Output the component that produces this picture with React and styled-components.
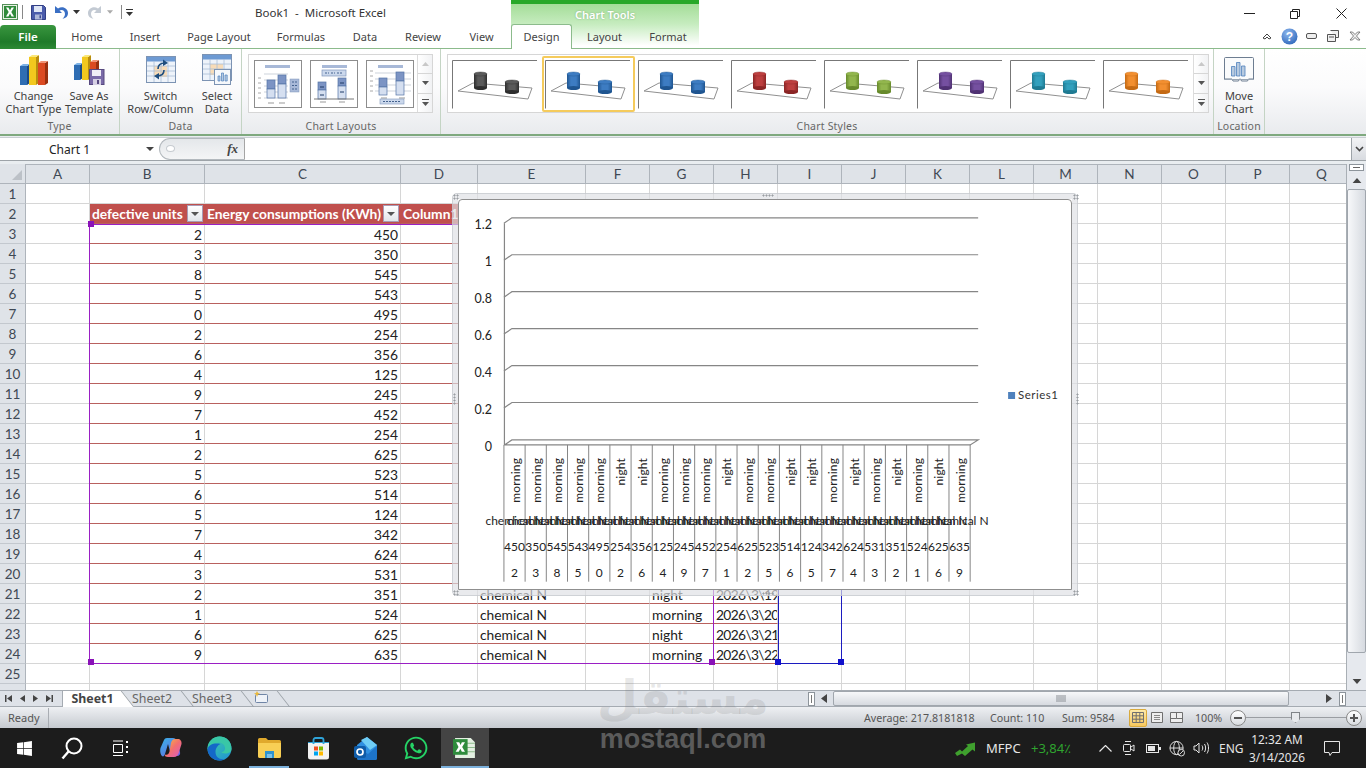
import React from 'react';
import styled, { createGlobalStyle } from 'styled-components';
import { FaWhatsapp, FaWindows } from 'react-icons/fa';

const UI = `"Noto Sans", "Open Sans", sans-serif`;
const CELL = `Lato, "Open Sans", sans-serif`;

const Global = createGlobalStyle`
  html, body { margin: 0; padding: 0; width: 1366px; height: 768px; overflow: hidden; background: #fff; }
  * { box-sizing: border-box; }
`;

const Page = styled.div`
  position: relative; width: 1366px; height: 768px; overflow: hidden;
  font-family: ${UI}; display: flex; flex-direction: column; background: #fff;
`;

/* ---------- Title bar ---------- */
const TitleBar = styled.div`display: flex; height: 24px; flex: none; align-items: stretch; background: #fff;`;
const QuickAccess = styled.div`width: 255px; display: flex; align-items: center; padding-left: 2px;`;
const QaSep = styled.span`width: 1px; height: 14px; background: #888; margin: ${p => p.$m || '0 7px 0 5px'};`;
const Gap = styled.span`width: ${p => p.$w}px; flex: none;`;
const TitleText = styled.div`width: 256px; font-size: 11.5px; color: #333; line-height: 25px; white-space: pre;`;
const ChartToolsCap = styled.div`
  width: 188px; text-align: center; font-size: 11px; font-weight: 600; color: #fff;
  border-top: 4px solid #28a828; text-shadow: 0 0 2px #7fb27a;
  background: linear-gradient(#a4dd98, #c6ecbf);
  line-height: 22px;
`;
const WinControls = styled.div`margin-left: auto; display: flex; padding-right: 2px;`;
const WinBtn = styled.div`width: 46px; display: flex; align-items: center; justify-content: center; padding-top: 3px;`;

/* ---------- Tab row ---------- */
const TabRow = styled.div`display: flex; height: 25px; flex: none; border-bottom: 1px solid #8cbb8c; background: #fff;`;
const FileTab = styled.div`
  width: 56px; margin-top: 1px; height: 24px; border-radius: 4px 4px 0 0; color: #fff; font-size: 11.5px; font-weight: 600;
  text-align: center; line-height: 23px; background: linear-gradient(#39963f, #1f7a29 70%, #2d8a34);
`;
const Tab = styled.div`
  width: ${p => p.$w}px; text-align: center; font-size: 11px; color: #444; line-height: 25px; height: 25px;
  ${p => p.$active && `background: #fff; border: 1px solid #8cbb8c; border-bottom: 0; border-radius: 3px 3px 0 0; line-height: 24px;`}
`;
const ContextTabs = styled.div`display: flex; width: 188px; background: linear-gradient(#c6ecbf, #fff 90%);`;
const HelpIcons = styled.div`margin-left: auto; display: flex; align-items: center;`;
const HelpSlot = styled.div`width: 22px; display: flex; justify-content: center; align-items: center;`;

/* ---------- Ribbon ---------- */
const Ribbon = styled.div`
  display: flex; height: 87px; flex: none; border-bottom: 2px solid #7fa97f;
  background: linear-gradient(#fff 0%, #fbfbfc 45%, #e9ebee 100%);
`;
const Group = styled.div`
  width: ${p => p.$w}px; display: flex; flex-direction: column; border-right: 1px solid #c4d4c4; flex: none;
`;
const GroupBody = styled.div`height: 69px; display: flex; padding-left: ${p => p.$pl || 0}px; gap: ${p => p.$gap || 0}px; padding-top: ${p => p.$pt || 0}px;`;
const GroupLabel = styled.div`height: 16px; text-align: center; font-size: 10.5px; color: #666; line-height: 16px; letter-spacing: .2px;`;
const LargeBtn = styled.div`
  width: ${p => p.$w}px; display: flex; flex-direction: column; align-items: center; font-size: 11px; color: #3f3f3f;
  line-height: 12.5px; text-align: center; white-space: nowrap;
`;
const BigIcon = styled.div`height: ${p => p.$h || 36}px; display: flex; align-items: flex-start; justify-content: center; flex: none; padding-top: ${p => p.$pt || 0}px;`;
const Gallery = styled.div`
  display: flex; height: 59px; background: #fff; border: 1px solid #d6d6d6; width: ${p => p.$w}px;
  padding: ${p => p.$pad || '0'};
`;
const Thumbs = styled.div`display: flex; gap: ${p => p.$gap || 0}px; flex: 1;`;
const GalleryScroll = styled.div`width: 15px; display: flex; flex-direction: column; border-left: 1px solid #dcdcdc; background: linear-gradient(90deg,#fff,#f1f2f4); margin-top: ${p => p.$mt}px;`;
const ScrollBtn = styled.div`flex: 1; display: flex; align-items: center; justify-content: center; border-bottom: 1px solid #d6d6d6; &:last-child { border-bottom: 0; }`;
const LayoutThumb = styled.div`width: 48px; height: 48px; border: 1px solid #8d8d8d; background: #fff; flex: none;`;
const StyleThumb = styled.div`
  width: 93px; height: 56px; flex: none; padding: 2px 0 0 1px;
  border-radius: 2px; border: 2px solid ${p => p.$sel ? '#f5cb5c' : 'transparent'};
`;

/* ---------- Formula bar ---------- */
const FormulaWrap = styled.div`height: 28px; flex: none; background: #e9edf0; padding-top: 1px; display: flex; flex-direction: column;`;
const FormulaRow = styled.div`display: flex; height: 24px; background: #fff; border-bottom: 1px solid #9da3a8; border-top: 1px solid #c9ced2;`;
const NameBox = styled.div`width: 159px; display: flex; align-items: center; padding-left: 49px; font-size: 12px; color: #222;`;
const NameArrow = styled.span`margin-left: 56px; width: 0; height: 0; border: 4px solid transparent; border-top: 4px solid #444; border-bottom: 0;`;
const FormulaPill = styled.div`
  width: 86px; display: flex; align-items: center; justify-content: flex-end; padding-right: 6px;
  border-radius: 12px 0 0 12px; background: linear-gradient(#e4e7ea, #f4f5f6); border: 1px solid #b3b9be; border-right: 1px solid #a5a5a5;
  font-family: "Liberation Serif", serif; font-style: italic; font-weight: 700; font-size: 13px; color: #444; position: relative;
`;
const PillDot = styled.span`position: absolute; left: 6px; top: 6px; width: 9px; height: 7px; border-radius: 50%; background: #fff; border: 1px solid #c6cbd0;`;
const FormulaInput = styled.div`flex: 1;`;
const FormulaExpand = styled.div`width: 15px; background: linear-gradient(#f2f3f5, #d8dbe0); border-left: 1px solid #9da3a8; display: flex; align-items: center; justify-content: center;`;

/* ---------- Sheet ---------- */
const SheetArea = styled.div`height: 526px; flex: none; display: flex; overflow: hidden;`;
const Grid = styled.div`width: 1346px; position: relative; overflow: hidden; font-family: ${CELL};`;
const Row = styled.div`display: flex; height: 20px;`;
const Corner = styled.div`width: 26px; flex: none; background: #dfe3e8; border-right: 1px solid #aeb4bb; border-bottom: 1px solid #aeb4bb; position: relative;
  &::after { content: ''; position: absolute; right: 3px; bottom: 3px; border: 5px solid transparent; border-right-color: #bcc1c7; border-bottom-color: #bcc1c7; }
`;
const ColHead = styled.div`
  width: ${p => p.$w}px; flex: none; background: #dfe3e8; border-right: 1px solid #aeb4bb; border-bottom: 1px solid #aeb4bb; border-top: 1px solid #aeb4bb;
  text-align: center; font-size: 13.5px; color: #3f4954; line-height: 19px;
`;
const RowHead = styled.div`
  width: 26px; flex: none; background: #dfe3e8; border-right: 1px solid #aeb4bb; border-bottom: 1px solid #c3c8ce;
  text-align: center; font-size: 13.5px; color: #3f4954; line-height: 21px;
`;
const Cell = styled.div`
  width: ${p => p.$w}px; flex: none; position: relative; overflow: hidden; white-space: nowrap;
  border-right: 1px solid ${p => p.$header ? 'transparent' : '#d6d6d6'};
  border-bottom: 1px solid ${p => p.$red ? '#b9615e' : '#d6d6d6'};
  background: ${p => p.$header ? '#c0504d' : 'transparent'};
  color: ${p => p.$header ? '#fff' : '#222'};
  font-weight: ${p => p.$header ? 700 : 400};
  text-align: ${p => p.$num ? 'right' : 'left'};
  padding: ${p => p.$header ? '0 2px' : '1px 2px 0'}; font-size: 13.8px; line-height: 20px;
  letter-spacing: ${p => p.$tight ? '-.65px' : 'normal'};
`;
const FilterBtn = styled.span`
  position: absolute; right: 1px; top: 1px; width: 16px; height: 17px; background: linear-gradient(#fff, #e2e5ea); border: 1px solid #a89bb5;
  display: flex; align-items: center; justify-content: center;
  &::after { content: ''; border: 4px solid transparent; border-top: 4px solid #555; border-bottom: 0; }
`;
const RangeFrame = styled.div`
  position: absolute; left: ${p => p.$l}px; top: ${p => p.$t}px; width: ${p => p.$w}px; height: ${p => p.$h}px;
  border: 1px solid ${p => p.$c}; pointer-events: none;
`;
const Handle = styled.span`
  position: absolute; left: ${p => p.$x - 3}px; top: ${p => p.$y - 3}px; width: 6px; height: 6px; background: ${p => p.$c};
`;

/* ---------- Chart ---------- */
const ChartFrame = styled.div`
  position: absolute; left: 452px; top: 29px; width: 626px; height: 403px;
  border: 6px solid rgba(222,224,228,.68); border-radius: 5px; outline: 1px solid rgba(190,194,198,.6); outline-offset: -1px;
`;
const ChartInner = styled.div`width: 100%; height: 100%; background: #fff; border: 1px solid #8f8f8f; border-radius: 4px 4px 0 0;`;
const ChartSvg = styled.svg`display: block; width: 100%; height: 100%; font-family: ${CELL};`;
const Grip = styled.span`
  position: absolute; width: ${p => p.$w}px; height: ${p => p.$h}px;
  left: ${p => p.$l}; top: ${p => p.$t};
  background-image: radial-gradient(#9a9ea3 45%, transparent 50%); background-size: 3px 3px;
`;

/* ---------- Scrollbars ---------- */
const VScroll = styled.div`width: 20px; flex: none; background: #e6e9ee; border-left: 1px solid #a9afb5; display: flex; flex-direction: column; align-items: center;`;
const SplitTop = styled.div`width: 15px; height: 7px; background: #fff; border: 1px solid #8d949b; display:flex; align-items:center; justify-content:center; &::after{content:'';width:7px;height:1px;background:#666;}`;
const ArrowBtn = styled.div`height: 18px; width: 100%; display: flex; align-items: center; justify-content: center; flex: none;`;
const VThumb = styled.div`width: 100%; height: 464px; background: linear-gradient(90deg, #f7f8fa, #d6dae0); border: 1px solid #a0a6ad; border-radius: 2px; flex: none;`;
const VSpacer = styled.div`flex: 1;`;

const BottomBar = styled.div`height: 17px; flex: none; display: flex; background: #dee2e8; border-top: 1px solid #a5abb2; border-bottom: 1px solid #a5abb2; font-size: 12.4px;`;
const NavBtns = styled.div`width: 63px; display: flex; align-items: center; padding-left: 5px; gap: 8px; border-right: 1px solid #a5abb2;`;
const SheetTab = styled.div`
  width: ${p => p.$w}px; height: 16px; position: relative; text-align: center; line-height: 15px;
  color: ${p => p.$active ? '#444' : '#666'}; font-weight: ${p => p.$active ? 700 : 400};
  background: ${p => p.$active ? '#fff' : 'transparent'};
  &::after { content: ''; position: absolute; right: -6px; top: 0; width: 12px; height: 16px; border-right: 1px solid #9aa0a6; transform: skewX(38deg); background: ${p => p.$active ? '#fff' : 'transparent'}; }
`;
const TabLabel = styled.span`position: relative; z-index: 1;`;
const TabsFill = styled.div`flex: 1; display: flex;`;
const HScrollArea = styled.div`width: 558px; display: flex; align-items: center; flex: none;`;
const SplitV = styled.div`width: 7px; height: 14px; background: #fff; border: 1px solid #8d949b; flex: none; margin: ${p => p.$m}; display:flex; align-items:center; justify-content:center; &::after{content:'';width:1px;height:8px;background:#777;}`;
const HThumb = styled.div`width: 456px; height: 15px; margin-right: 37px; background: linear-gradient(#f7f8fa, #d6dae0); border: 1px solid #a0a6ad; border-radius: 2px; display: flex; align-items: center; justify-content: center; flex: none;`;
const HArrow = styled.svg`flex: none; margin: ${p => p.$m};`;

const StatusBar = styled.div`
  height: 21px; flex: none; display: flex; align-items: center; background: linear-gradient(#eef0f3, #c6cad0); font-size: 10.7px; color: #555;
`;
const ReadyText = styled.div`width: 49px; padding-left: 8px; border-right: 1px solid #a9adb3; line-height: 20px; font-size: 11px;`;
const StatText = styled.div`margin-left: ${p => p.$ml}px; width: ${p => p.$w}px; white-space: nowrap; flex: none;`;
const ViewBtn = styled.div`
  width: 18px; height: 18px; display: flex; align-items: center; justify-content: center; margin-left: ${p => p.$ml || 0}px; flex: none;
  ${p => p.$on && 'background: linear-gradient(#fde9a8,#f7c85e); border: 1px solid #d8a93d; border-radius: 2px;'}
`;
const ZoomRound = styled.div`
  width: 16px; height: 16px; border-radius: 50%; border: 1px solid #888; background: linear-gradient(#fff,#d8dbe0); display: flex; align-items: center; justify-content: center; flex: none;
  margin-left: ${p => p.$ml}px; position: relative;
  &::after { content: ''; width: 8px; height: 2px; background: #555; }
`;
const ZoomRoundPlus = styled(ZoomRound)`
  &::before { content: ''; position: absolute; width: 2px; height: 8px; background: #555; left: 6px; top: 3px; }
`;
const SliderTrack = styled.div`width: 100px; height: 1px; background: #9a9da2; position: relative; flex: none;`;
const SliderThumb = styled.span`
  position: absolute; left: 45px; top: -5px; width: 9px; height: 11px; background: #e8eaed; border: 1px solid #808488;
  clip-path: polygon(0 0, 100% 0, 100% 65%, 50% 100%, 0 65%);
`;

/* ---------- Taskbar ---------- */
const Taskbar = styled.div`height: 40px; background: #1c1c1c; display: flex; align-items: center; color: #e4e4e4; flex: none;`;
const TaskSlot = styled.div`
  width: ${p => p.$w || 48}px; height: 40px; display: flex; align-items: center; justify-content: center; flex: none; position: relative;
  margin-left: ${p => p.$ml || 0}px;
  ${p => p.$active && 'background: #444;'}
  ${p => p.$bar && `&::after { content: ''; position: absolute; left: ${p.$active ? 0 : 5}px; right: ${p.$active ? 0 : 5}px; bottom: 0; height: 2px; background: #7cb1dc; }`}
`;
const TrayText = styled.div`
  margin-left: ${p => p.$ml || 0}px; width: ${p => p.$w}px; font-size: ${p => p.$fs || 12}px; color: ${p => p.$c || '#e6e6e6'}; white-space: nowrap; flex: none;
`;
const Clock = styled.div`margin-left: 6px; width: 56px; text-align: center; font-size: 11.8px; line-height: 18px; color: #e6e6e6; flex: none;`;

/* ---------- Watermark ---------- */
const WatermarkAr = styled.div`
  position: absolute; left: 600px; top: 668px; width: 166px; display: flex; justify-content: center; font-family: "DejaVu Sans", sans-serif; font-weight: 700; font-size: 47px;
  line-height: 60px; color: rgba(110,110,110,.17); pointer-events: none; white-space: nowrap;
`;
const WatermarkEn = styled.div`
  position: absolute; left: 590px; top: 722px; width: 186px; text-align: center; font-family: "Liberation Sans", sans-serif; font-weight: 700; font-size: 27px;
  line-height: 34px; color: rgba(135,135,135,.6); pointer-events: none; white-space: nowrap;
`;

/* ---------- Drawings ---------- */
const ExcelIcon = () => (
  <svg width="16" height="16" viewBox="0 0 16 16"><rect x=".5" y=".5" width="15" height="15" fill="#e8f1e4" stroke="#55905a"/><rect x="2" y="2" width="12" height="12" fill="#2f8a3a"/><path d="M4 3.500h2.400L8 6.500l1.600-3H12L9.300 8 12 12.500H9.600L8 9.600l-1.600 2.900H4L6.700 8z" fill="#fff"/></svg>
);
const SaveIcon = () => (
  <svg width="15" height="15" viewBox="0 0 15 15"><path d="M.5.5h12l2 2v12H.5z" fill="#4a5bab" stroke="#323f85"/><rect x="3" y="1" width="8" height="6" fill="#dfe6f5"/><rect x="4" y="9.500" width="7" height="5" fill="#aeb7d8"/><rect x="8.500" y="10.300" width="1.500" height="3" fill="#3a4890"/></svg>
);
const UNDO = 'M1 1v7h7L5.500 5.600C8 4 11 5.500 11 9c0 1.800-1 3.500-2.500 4.500C12 13.500 14 11 14 8 14 3.500 8.500.5 4 3.500z';
const Undo = ({ c }) => <svg width="15" height="15" viewBox="0 0 15 15"><path d={UNDO} fill={c}/></svg>;
const Redo = ({ c }) => <svg width="15" height="15" viewBox="0 0 15 15"><path d={UNDO} fill={c} transform="matrix(-1 0 0 1 15 0)"/></svg>;
const Tri = ({ c = '#333', w = 7, h = 4, up }) => (
  <svg width={w} height={h} viewBox="0 0 7 4"><path d={up ? 'M0 4L3.500 0 7 4z' : 'M0 0h7L3.500 4z'} fill={c}/></svg>
);
const More = () => <svg width="7" height="7" viewBox="0 0 7 7"><path d="M0 0h7v1H0zM0 3h7L3.500 7z" fill="#555"/></svg>;
const Bar3D = ({ x, y, w, h, front, side, top }) => (
  <g>
    <rect x={x} y={y} width={w} height={h} fill={front}/>
    <path d={`M${x + w} ${y}l3 -2v${h}l-3 2z`} fill={side}/>
    <path d={`M${x} ${y}l3 -2h${w}l-3 2z`} fill={top}/>
  </g>
);
const BLUE = { front: '#2f6db3', side: '#1c4b85', top: '#7cb2e6' };
const YEL = { front: '#f2c81e', side: '#b88d0e', top: '#fbe778' };
const RED = { front: '#db4a22', side: '#99300f', top: '#f19274' };
const ChartTypeIcon = () => (
  <svg width="30" height="32" viewBox="0 0 30 32">
    <Bar3D x={1} y={12} w={7} h={19} {...BLUE}/>
    <Bar3D x={10} y={3} w={7} h={28} {...YEL}/>
    <Bar3D x={19} y={9} w={7} h={22} {...RED}/>
  </svg>
);
const SaveTemplateIcon = () => (
  <svg width="32" height="31" viewBox="0 0 32 31">
    <Bar3D x={1} y={11} w={6} h={15} {...BLUE}/>
    <Bar3D x={9} y={3} w={6} h={23} {...YEL}/>
    <Bar3D x={17} y={8} w={6} h={18} {...RED}/>
    <rect x="16.500" y="15.500" width="14.500" height="15" fill="#7a6aa8" stroke="#57497f"/>
    <rect x="19" y="16" width="9" height="6" fill="#f1eef6"/>
    <rect x="20" y="25" width="8" height="6" fill="#d6d0e4"/>
    <rect x="24" y="26" width="2" height="4" fill="#57497f"/>
  </svg>
);
const TableBase = () => (
  <g>
    <rect x=".5" y=".5" width="29" height="26" fill="#eef3fa" stroke="#7c93b3"/>
    <rect x="1" y="1" width="28" height="4.500" fill="#6d9ad3"/>
    <rect x="8" y="10" width="13" height="11" fill="#f8dcb8"/>
    <path d="M1 10h28M1 15h28M1 20h28M8 5v21M15 5v21M22 5v21" stroke="#a8bdd6" strokeWidth=".8"/>
  </g>
);
const SwitchIcon = () => (
  <svg width="30" height="28" viewBox="0 0 30 28">
    <TableBase/>
    <path d="M12 13c0-4 3-6 7-6" fill="none" stroke="#1d4d7e" strokeWidth="1.600"/><path d="M17 3.500l5 3.500-5 3z" fill="#1d4d7e"/>
    <path d="M18 14c0 4-3 6-7 6" fill="none" stroke="#1d4d7e" strokeWidth="1.600"/><path d="M13 23.500L8 20l5-3z" fill="#1d4d7e"/>
  </svg>
);
const SelectDataIcon = () => (
  <svg width="30" height="31" viewBox="0 0 30 31">
    <TableBase/>
    <rect x="12.500" y="15.500" width="16" height="15" fill="#f6f8fb" stroke="#7c93b3"/>
    <path d="M16 27v-5h2v5zM19.500 27v-8h2v8zM23 27v-6h2.200v6z" fill="#b7cae0" stroke="#4f81bd" strokeWidth=".7"/>
  </svg>
);
const MoveChartIcon = () => (
  <svg width="30" height="26" viewBox="0 0 30 26">
    <path d="M1.500.5h27a1 1 0 0 1 1 1V22h-5l-1 2h-6l-1-2h-1l-1 2H9l-1-2H.5V1.500a1 1 0 0 1 1-1z" fill="#fafbfc" stroke="#6d7d91"/>
    <path d="M7.500 19V9.500h3.500V19zM12.500 19V5.500h3.500V19zM17.500 19V9h3.500v10z" fill="#b7cae0" stroke="#4f81bd" strokeWidth=".8"/>
    <path d="M0 22.500h30" stroke="#9aa6b5"/>
  </svg>
);

const LB = '#a8b9d8', LBD = '#5574a6';
const Stack = ({ x, y, h, split }) => (
  <g>
    <rect x={x} y={y} width="8" height={split} fill="#7c94c4" stroke={LBD} strokeWidth=".7"/>
    <rect x={x} y={y + split} width="8" height={h - split} fill="#d5dff0" stroke={LBD} strokeWidth=".7"/>
  </g>
);
const Layout1 = () => (
  <svg width="46" height="46" viewBox="0 0 46 46">
    <rect x="10" y="4" width="25" height="3" fill={LB}/>
    <path d="M9 13h24M9 19h24M9 25h24M9 31h24M9 37h24" stroke="#b8c0cc" strokeWidth=".7"/>
    <path d="M3 17h3M3 22h3M3 27h3M3 32h3M3 37h3" stroke="#a8a8a8"/>
    <Stack x={12} y={19} h={18} split={9}/><Stack x={23} y={14} h={23} split={9}/>
    <rect x="35" y="18" width="9" height="13" fill={LB} stroke="#7f96bb" strokeWidth=".5"/>
    <path d="M37 21h2M37 24.500h2M37 28h2M40 21h2M40 24.500h2M40 28h2" stroke="#44628f"/>
    <path d="M13 42h6M24 42h6" stroke="#999"/>
  </svg>
);
const Layout2 = () => (
  <svg width="46" height="46" viewBox="0 0 46 46">
    <rect x="11" y="4" width="25" height="3" fill={LB}/>
    <rect x="11" y="9" width="24" height="6" fill="#cbd8ec" stroke="#7f96bb" strokeWidth=".7"/>
    <path d="M14 12h4M20 12h4M26 12h6" stroke="#44628f" strokeDasharray="2 1"/>
    <Stack x={7} y={21} h={17} split={8}/><Stack x={27} y={17} h={21} split={8}/>
    <path d="M9 26h4M9 34h4M29 22h4M29 31h4" stroke="#1f3a66" strokeWidth="1"/>
    <path d="M3 38h40" stroke="#777"/>
    <path d="M9 41h6M28 41h6" stroke="#999"/>
  </svg>
);
const Layout3 = () => (
  <svg width="46" height="46" viewBox="0 0 46 46">
    <rect x="11" y="4" width="25" height="3" fill={LB}/>
    <path d="M8 12h36M8 18h36M8 24h36M8 30h36" stroke="#b8c0cc" strokeWidth=".7"/>
    <path d="M3 10h3M3 15h3M3 20h3M3 25h3M3 30h3" stroke="#a8a8a8"/>
    <Stack x={12} y={17} h={17} split={9}/><Stack x={29} y={11} h={23} split={9}/>
    <path d="M14 37h6M32 37h6" stroke="#999"/>
    <rect x="13" y="38" width="24" height="5" fill="#cbd8ec" stroke="#7f96bb" strokeWidth=".6"/>
    <path d="M16 40.500h18" stroke="#44628f" strokeDasharray="2 1"/>
  </svg>
);
const Cyl = ({ x, y, w, h, c, d, id }) => (
  <g>
    <rect x={x} y={y + 2} width={w} height={h - 4} fill={`url(#${id})`}/>
    <ellipse cx={x + w / 2} cy={y + h - 2} rx={w / 2} ry={2} fill={d}/>
    <ellipse cx={x + w / 2} cy={y + 2} rx={w / 2} ry={2} fill={c} stroke={d} strokeWidth=".4"/>
  </g>
);
const StyleArt = ({ c, d, id }) => (
  <svg width="85" height="49" viewBox="0 0 85 49" style={{ display: 'block' }}>
    <defs>
      <linearGradient id={id}>
        <stop offset="0" stopColor={d}/><stop offset=".3" stopColor={c}/><stop offset=".7" stopColor={c}/><stop offset="1" stopColor={d}/>
      </linearGradient>
    </defs>
    <path d="M.5 48.500V.5H85" fill="none" stroke="#777"/>
    <path d="M6 31L21 23l59 5-4 11z" fill="#fff" stroke="#909090"/>
    <Cyl id={id} x={22} y={12} w={13} h={18} c={c} d={d}/>
    <Cyl id={id} x={53} y={20} w={14} h={14} c={c} d={d}/>
  </svg>
);

const COLS = [['A', 64], ['B', 115], ['C', 196], ['D', 77], ['E', 108], ['F', 64], ['G', 64], ['H', 64], ['I', 64], ['J', 64], ['K', 64], ['L', 64], ['M', 64], ['N', 64], ['O', 64], ['P', 64], ['Q', 64]];
const B = [2, 3, 8, 5, 0, 2, 6, 4, 9, 7, 1, 2, 5, 6, 5, 7, 4, 3, 2, 1, 6, 9];
const C = [450, 350, 545, 543, 495, 254, 356, 125, 245, 452, 254, 625, 523, 514, 124, 342, 624, 531, 351, 524, 625, 635];
const m = 'morning', n = 'night';
const G = [m, m, m, m, m, n, n, m, m, m, n, m, m, n, n, m, n, m, n, m, n, m];
const STYLES = [['#5a5a5a', '#2e2e2e'], ['#3d7cc2', '#1f5590'], ['#3d7cc2', '#1f5590'], ['#bd3f3f', '#8a2525'], ['#92b64d', '#678a2c'], ['#7550a0', '#503273'], ['#33a0bd', '#1f7a92'], ['#f28f30', '#c46a14']];

function cellText(col, i) {
  if (i === 0) return { B: 'defective units', C: 'Energy consumptions (KWh)', D: 'Column1' }[col] || '';
  const k = i - 1;
  if (col === 'B') return B[k];
  if (col === 'C') return C[k];
  if (col === 'E') return 'chemical N';
  if (col === 'G') return G[k];
  if (col === 'H') return `2026\\3\\${k + 1}`;
  return '';
}

const SheetRow = ({ num }) => {
  const t = num >= 2 && num <= 24;
  return (
    <Row>
      <RowHead>{num <= 25 ? num : ''}</RowHead>
      {COLS.map(([c, w]) => {
        const inTable = t && 'BCDEFGH'.includes(c);
        const hd = num === 2 && inTable;
        const txt = t ? cellText(c, num - 2) : '';
        return (
          <Cell key={c} $w={w} $header={hd} $red={inTable} $tight={c === 'H'} $num={!hd && (c === 'B' || c === 'C')}>
            {txt}{hd && (c === 'B' || c === 'C') && <FilterBtn/>}
          </Cell>
        );
      })}
    </Row>
  );
};

const X0 = 504, SLOT = (971 - 504) / 22;
const Chart = () => {
  const ys = [217.5, 254.5, 291.5, 328.5, 365.5, 402.5];
  const labels = ['1.2', '1', '0.8', '0.6', '0.4', '0.2'];
  return (
    <ChartSvg viewBox="459 200 613 389">
      {ys.map((y, i) => (
        <g key={y}>
          <path d={`M504 ${y + 5.5}L512 ${y}H979`} fill="none" stroke="#868686" strokeWidth="1.200"/>
          <text x="492" y={y + 11.5} fontSize="12.5" textAnchor="end" fill="#222">{labels[i]}</text>
        </g>
      ))}
      <text x="492" y="451" fontSize="12.5" textAnchor="end" fill="#222">0</text>
      <path d="M504.500 223V445H971L979 440H512L504.500 445" fill="none" stroke="#868686" strokeWidth="1.200"/>
      {Array.from({ length: 23 }).map((_, i) => (
        <path key={i} d={`M${X0 + i * SLOT} 445V582`} stroke="#868686" strokeWidth="1"/>
      ))}
      {G.map((g, i) => {
        const cx = X0 + (i + .5) * SLOT;
        return (
          <g key={i} fill="#222" fontSize="12">
            <text transform={`translate(${cx + 5} 458) rotate(-90)`} textAnchor="end" letterSpacing=".2">{g}</text>
            <text x={cx} y="525" textAnchor="middle">chemical N</text>
            <text x={cx} y="551" textAnchor="middle">{C[i]}</text>
            <text x={cx} y="577" textAnchor="middle">{B[i]}</text>
          </g>
        );
      })}
      <rect x="1009" y="392" width="7" height="7" fill="#4f81bd"/>
      <text x="1019" y="399" fontSize="11.500" fill="#333" letterSpacing=".5">Series1</text>
    </ChartSvg>
  );
};

export default function App() {
  return (
    <Page>
      <Global/>
      <TitleBar>
        <QuickAccess>
          <ExcelIcon/><QaSep $m="0 8px 0 4px"/>
          <SaveIcon/><Gap $w={8}/>
          <Undo c="#3a6fc4"/><Gap $w={4}/><Tri/><Gap $w={7}/>
          <Redo c="#c3cad3"/><Gap $w={5}/><Tri c="#aaa" w={6}/><Gap $w={8}/>
          <QaSep $m="0 4px 0 0"/><svg width="7" height="7" viewBox="0 0 7 7"><path d="M0 0h7v1H0zM0 3h7L3.500 7z" fill="#333"/></svg>
        </QuickAccess>
        <TitleText>Book1  -  Microsoft Excel</TitleText>
        <ChartToolsCap>Chart Tools</ChartToolsCap>
        <WinControls>
          <WinBtn><svg width="11" height="1"><rect width="11" height="1" fill="#222"/></svg></WinBtn>
          <WinBtn><svg width="10" height="10" viewBox="0 0 10 10"><path d="M.5 2.500h7v7h-7zM2.500 2.500v-2h7v7h-2" fill="none" stroke="#222"/></svg></WinBtn>
          <WinBtn><svg width="11" height="11" viewBox="0 0 11 11"><path d="M.5.5l10 10M10.500.5l-10 10" stroke="#222"/></svg></WinBtn>
        </WinControls>
      </TitleBar>

      <TabRow>
        <FileTab>File</FileTab>
        <Tab $w={62}>Home</Tab><Tab $w={54}>Insert</Tab><Tab $w={94}>Page Layout</Tab><Tab $w={70}>Formulas</Tab><Tab $w={58}>Data</Tab><Tab $w={58}>Review</Tab><Tab $w={59}>View</Tab>
        <ContextTabs>
          <Tab $w={61} $active>Design</Tab><Tab $w={65}>Layout</Tab><Tab $w={62}>Format</Tab>
        </ContextTabs>
        <HelpIcons>
          <HelpSlot><svg width="10" height="8" viewBox="0 0 10 8"><path d="M1 6L5 2l4 4-2 1-2-2-2 2z" fill="none" stroke="#444"/></svg></HelpSlot>
          <HelpSlot><svg width="17" height="17" viewBox="0 0 17 17"><defs><radialGradient id="hp" cx=".4" cy=".3" r=".8"><stop offset="0" stopColor="#8fb8ee"/><stop offset="1" stopColor="#2a63b8"/></radialGradient></defs><circle cx="8.500" cy="8.500" r="8" fill="url(#hp)"/><text x="8.500" y="13" textAnchor="middle" fontSize="12" fontWeight="700" fill="#fff" fontFamily="Liberation Sans">?</text></svg></HelpSlot>
          <HelpSlot><svg width="11" height="6" viewBox="0 0 11 6"><rect x=".5" y=".5" width="10" height="5" rx="1.500" fill="#eee" stroke="#555"/></svg></HelpSlot>
          <HelpSlot><svg width="12" height="12" viewBox="0 0 12 12"><path d="M3.500.5h8v7h-3M.5 4.500h8v7h-8z" fill="#f0f0f0" stroke="#555"/><path d="M2 7h5" stroke="#555"/></svg></HelpSlot>
          <HelpSlot><svg width="12" height="10" viewBox="0 0 12 10"><path d="M1 1h2.500L6 3.500 8.500 1H11L7.500 5 11 9H8.500L6 6.500 3.500 9H1l3.500-4z" fill="#eee" stroke="#666" strokeWidth=".8"/></svg></HelpSlot>
        </HelpIcons>
      </TabRow>

      <Ribbon>
        <Group $w={120}>
          <GroupBody $pl={6} $gap={4} $pt={5}>
            <LargeBtn $w={55}><BigIcon><ChartTypeIcon/></BigIcon>Change<br/>Chart Type</LargeBtn>
            <LargeBtn $w={48}><BigIcon><SaveTemplateIcon/></BigIcon>Save As<br/>Template</LargeBtn>
          </GroupBody>
          <GroupLabel>Type</GroupLabel>
        </Group>
        <Group $w={122}>
          <GroupBody $pl={7} $gap={5} $pt={5}>
            <LargeBtn $w={67}><BigIcon $pt={2}><SwitchIcon/></BigIcon>Switch<br/>Row/Column</LargeBtn>
            <LargeBtn $w={36}><BigIcon><SelectDataIcon/></BigIcon>Select<br/>Data</LargeBtn>
          </GroupBody>
          <GroupLabel>Data</GroupLabel>
        </Group>
        <Group $w={199}>
          <GroupBody $pl={6} $pt={5}>
            <Gallery $w={185} $pad="5px 0 0 5px">
              <Thumbs $gap={8}>
                <LayoutThumb><Layout1/></LayoutThumb>
                <LayoutThumb><Layout2/></LayoutThumb>
                <LayoutThumb><Layout3/></LayoutThumb>
              </Thumbs>
              <GalleryScroll $mt={-5}>
                <ScrollBtn><Tri up c="#c8c8c8"/></ScrollBtn>
                <ScrollBtn><Tri c="#555"/></ScrollBtn>
                <ScrollBtn><More/></ScrollBtn>
              </GalleryScroll>
            </Gallery>
          </GroupBody>
          <GroupLabel>Chart Layouts</GroupLabel>
        </Group>
        <Group $w={773}>
          <GroupBody $pl={6} $pt={5}>
            <Gallery $w={762} $pad="1px 0 0 1px">
              <Thumbs>
                {STYLES.map(([c, d], i) => (
                  <StyleThumb key={i} $sel={i === 1}><StyleArt id={`cy${i}`} c={c} d={d}/></StyleThumb>
                ))}
              </Thumbs>
              <GalleryScroll $mt={-1}>
                <ScrollBtn><Tri up c="#c8c8c8"/></ScrollBtn>
                <ScrollBtn><Tri c="#555"/></ScrollBtn>
                <ScrollBtn><More/></ScrollBtn>
              </GalleryScroll>
            </Gallery>
          </GroupBody>
          <GroupLabel>Chart Styles</GroupLabel>
        </Group>
        <Group $w={51}>
          <GroupBody $pt={8}>
            <LargeBtn $w={50}><BigIcon $h={33}><MoveChartIcon/></BigIcon>Move<br/>Chart</LargeBtn>
          </GroupBody>
          <GroupLabel>Location</GroupLabel>
        </Group>
      </Ribbon>

      <FormulaWrap>
        <FormulaRow>
          <NameBox>Chart 1<NameArrow/></NameBox>
          <FormulaPill><PillDot/>fx</FormulaPill>
          <FormulaInput/>
          <FormulaExpand><svg width="9" height="6" viewBox="0 0 9 6"><path d="M1 1l3.500 3.500L8 1" fill="none" stroke="#444" strokeWidth="1.600"/></svg></FormulaExpand>
        </FormulaRow>
      </FormulaWrap>

      <SheetArea>
        <Grid>
          <Row>
            <Corner/>
            {COLS.map(([c, w]) => <ColHead key={c} $w={w}>{c}</ColHead>)}
          </Row>
          {Array.from({ length: 26 }).map((_, i) => <SheetRow key={i} num={i + 1}/>)}

          <RangeFrame $c="#9a1fc4" $l={89} $t={60} $w={625} $h={440}/>
          <RangeFrame $c="#1c1cc0" $l={778} $t={60} $w={64} $h={440}/>
          <Handle $c="#8a12b8" $x={91} $y={60}/>
          <Handle $c="#8a12b8" $x={91} $y={498}/>
          <Handle $c="#8a12b8" $x={712} $y={498}/>
          <Handle $c="#1111cc" $x={778} $y={498}/>
          <Handle $c="#1111cc" $x={841} $y={498}/>

          <ChartFrame>
            <ChartInner><Chart/></ChartInner>
            <Grip $w={12} $h={3} $l="304px" $t="-5px"/>
            <Grip $w={3} $h={12} $l="-5px" $t="194px"/>
            <Grip $w={3} $h={12} $l="618px" $t="194px"/>
            <Grip $w={12} $h={3} $l="304px" $t="393px"/>
            <Grip $w={6} $h={6} $l="-5px" $t="-5px"/>
            <Grip $w={6} $h={6} $l="615px" $t="-5px"/>
            <Grip $w={6} $h={6} $l="-5px" $t="391px"/>
            <Grip $w={6} $h={6} $l="615px" $t="391px"/>
          </ChartFrame>
        </Grid>
        <VScroll>
          <SplitTop/>
          <ArrowBtn><Tri up c="#444" w={10} h={5}/></ArrowBtn>
          <VThumb/>
          <VSpacer/>
          <ArrowBtn><Tri c="#444" w={10} h={5}/></ArrowBtn>
        </VScroll>
      </SheetArea>

      <BottomBar>
        <NavBtns>
          <svg width="7" height="7" viewBox="0 0 7 7"><path d="M0 0h1.500v7H0zM7 0v7L2 3.500z" fill="#444"/></svg>
          <svg width="5" height="7" viewBox="0 0 5 7"><path d="M5 0v7L0 3.500z" fill="#444"/></svg>
          <svg width="5" height="7" viewBox="0 0 5 7"><path d="M0 0v7l5-3.500z" fill="#444"/></svg>
          <svg width="7" height="7" viewBox="0 0 7 7"><path d="M7 0H5.500v7H7zM0 0v7l5-3.500z" fill="#444"/></svg>
        </NavBtns>
        <SheetTab $w={59} $active><TabLabel>Sheet1</TabLabel></SheetTab>
        <SheetTab $w={60}><TabLabel>Sheet2</TabLabel></SheetTab>
        <SheetTab $w={60}><TabLabel>Sheet3</TabLabel></SheetTab>
        <SheetTab $w={36}>
          <svg width="15" height="13" viewBox="0 0 15 13"><rect x="2.500" y="3.500" width="12" height="8" rx="1" fill="#eef2f8" stroke="#6f85a6"/><path d="M4 0l1 2 2 .5-2 1L4 6 3 3.500l-2-1 2-.5z" fill="#eab93a"/></svg>
        </SheetTab>
        <TabsFill/>
        <HScrollArea>
          <SplitV $m="0 6px 0 0"/>
          <HArrow width="6" height="9" viewBox="0 0 6 9" $m="0 6px 0 0"><path d="M6 0v9L0 4.500z" fill="#444"/></HArrow>
          <HThumb><svg width="10" height="7" viewBox="0 0 10 7"><path d="M1 0v7M3 0v7M5 0v7M7 0v7M9 0v7" stroke="#8b9096"/></svg></HThumb>
          <HArrow width="6" height="9" viewBox="0 0 6 9" $m="0 7px 0 0"><path d="M0 0v9l6-4.500z" fill="#444"/></HArrow>
          <SplitV $m="0"/>
        </HScrollArea>
      </BottomBar>

      <StatusBar>
        <ReadyText>Ready</ReadyText>
        <StatText $ml={815} $w={111}>Average: 217.8181818</StatText>
        <StatText $ml={15} $w={57}>Count: 110</StatText>
        <StatText $ml={15} $w={52}>Sum: 9584</StatText>
        <ViewBtn $on $ml={15}><svg width="12" height="11" viewBox="0 0 12 11"><path d="M.5.5h11v10H.5zM.5 3.800h11M.5 7.200h11M4.200.5v10M7.800.5v10" fill="none" stroke="#6f6f6f"/></svg></ViewBtn>
        <ViewBtn $ml={1}><svg width="12" height="11" viewBox="0 0 12 11"><path d="M.5.5h11v10H.5z" fill="#eee" stroke="#6f6f6f"/><path d="M3 3.500h6M3 5.500h6M3 7.500h6" stroke="#888"/></svg></ViewBtn>
        <ViewBtn $ml={1}><svg width="13" height="11" viewBox="0 0 13 11"><path d="M.5.5h12v10H.5z" fill="#eee" stroke="#6f6f6f"/><path d="M6.500.5v6H.5M12.500 6.500H6.500" stroke="#6f6f6f" fill="none"/></svg></ViewBtn>
        <StatText $ml={10} $w={27}>100%</StatText>
        <ZoomRound $ml={8}/>
        <SliderTrack><SliderThumb/></SliderTrack>
        <ZoomRoundPlus $ml={0}/>
      </StatusBar>

      <Taskbar>
        <TaskSlot><FaWindows size={17} color="#fff"/></TaskSlot>
        <TaskSlot><svg width="22" height="23" viewBox="0 0 22 23"><circle cx="13" cy="9" r="7.500" fill="none" stroke="#fff" strokeWidth="2"/><path d="M7.500 14.500L1.500 21.500" stroke="#fff" strokeWidth="2.400"/></svg></TaskSlot>
        <TaskSlot><svg width="17" height="17" viewBox="0 0 17 17"><path d="M1 1h10M1 15.500h10M1.500 4.500h9v8h-9z" fill="none" stroke="#fff"/><path d="M14 1h2v2h-2zM14 6h2v2h-2zM14 11h2v2h-2z" fill="#fff"/></svg></TaskSlot>
        <TaskSlot $ml={3}>
          <svg width="24" height="24" viewBox="0 0 24 24">
            <defs>
              <linearGradient id="cp1" x1="0" y1="0" x2="1" y2="1"><stop offset="0" stopColor="#37b6e8"/><stop offset="1" stopColor="#6f5be0"/></linearGradient>
              <linearGradient id="cp2" x1="0" y1="0" x2="1" y2="1"><stop offset="0" stopColor="#f6c13a"/><stop offset=".5" stopColor="#f36f6f"/><stop offset="1" stopColor="#d95ac6"/></linearGradient>
            </defs>
            <path d="M8 2h6c2 0 3 1 3.500 3L21 16c.6 2-.5 4-3 4h-3c-2 0-3-1-3.500-3L9 8 6 18c-.5 2-2 3-3 2S.6 16 1.500 12L5 4c.5-1.200 1.500-2 3-2z" fill="url(#cp1)"/>
            <path d="M12 7c.5-2 2-4 4-4h3c2 0 4 2 3.500 5L20 16c-.7 3-2.500 5-5 5H9c-2 0-3.500-.8-3-2.500 2 1 4-.5 4.500-3z" fill="url(#cp2)"/>
          </svg>
        </TaskSlot>
        <TaskSlot>
          <svg width="25" height="25" viewBox="0 0 25 25">
            <defs>
              <linearGradient id="eg1" x1="0" y1="0" x2="1" y2="1"><stop offset="0" stopColor="#3fd3a0"/><stop offset="1" stopColor="#1f8fd8"/></linearGradient>
            </defs>
            <circle cx="12.500" cy="12.500" r="12" fill="url(#eg1)"/>
            <path d="M.5 13C1 6 6 .5 12.500.5 19 .5 24.500 5 24.500 13c0 3-3 4.500-6 4.500-2.500 0-4-1-4-1.500 2 0 3.500-1.500 3.500-3.500 0-3.500-3-6-6-6-5 0-8 3-11.500 6.500z" fill="#39c7a6"/>
            <path d="M.5 13c0 6.500 5.500 11.500 12 11.500 2 0 3.500-.5 5-1.500-5 1-9-2-9-7 0-4 2.500-7 5-8-6-1.500-12 .5-13 5z" fill="#1468c8"/>
          </svg>
        </TaskSlot>
        <TaskSlot $w={50} $ml={1} $bar>
          <svg width="23" height="20" viewBox="0 0 23 20"><path d="M0 1.500A1.500 1.500 0 0 1 1.500 0H8l2 2h11.500A1.500 1.500 0 0 1 23 3.500V18a2 2 0 0 1-2 2H2a2 2 0 0 1-2-2z" fill="#e0a92c"/><path d="M0 5h23v13a2 2 0 0 1-2 2H2a2 2 0 0 1-2-2z" fill="#f8cf55"/><rect x="7" y="13" width="9" height="7" fill="#2e93cf"/><rect x="9" y="16" width="5" height="4" fill="#7cc0e8"/></svg>
        </TaskSlot>
        <TaskSlot>
          <svg width="23" height="23" viewBox="0 0 23 23"><path d="M1 5.500h21V20a2.500 2.500 0 0 1-2.500 2.500h-16A2.500 2.500 0 0 1 1 20z" fill="#f2f2f2"/><path d="M6.500 7V3a2 2 0 0 1 2-2h6a2 2 0 0 1 2 2v4" fill="none" stroke="#2fa3d8" strokeWidth="1.800"/><path d="M1 5.500h21" stroke="#2fa3d8" strokeWidth="1"/><rect x="7" y="9.500" width="4" height="4" fill="#f25022"/><rect x="12" y="9.500" width="4" height="4" fill="#7fba00"/><rect x="7" y="14.500" width="4" height="4" fill="#00a4ef"/><rect x="12" y="14.500" width="4" height="4" fill="#ffb900"/></svg>
        </TaskSlot>
        <TaskSlot>
          <svg width="24" height="23" viewBox="0 0 24 23"><path d="M3 8L13 0l10 8v13a2 2 0 0 1-2 2H5a2 2 0 0 1-2-2z" fill="#2f8fe0"/><path d="M7 3l6-3 10 8-7 5z" fill="#6fcdf5"/><path d="M3 10l11 7 9-8v12a2 2 0 0 1-2 2H5a2 2 0 0 1-2-2z" fill="#1d74c9"/><rect x="0" y="9" width="12" height="12" rx="2" fill="#0f5ca8"/><circle cx="6" cy="15" r="3" fill="none" stroke="#fff" strokeWidth="1.700"/></svg>
        </TaskSlot>
        <TaskSlot $ml={2}><FaWhatsapp size={26} color="#25d366"/></TaskSlot>
        <TaskSlot $ml={1} $active $bar>
          <svg width="26" height="24" viewBox="0 0 23 23"><path d="M2 2h15l4 4v15H2z" fill="#e4f0e2"/><path d="M12 7h9M12 11h9M12 15h9" stroke="#8dbb8d"/><rect x="0" y="3" width="14" height="15" fill="#2e8b3c"/><path d="M3 6h3l1.200 2.600L8.500 6h3L8.800 10.500l2.700 4.500h-3L7 12.300 5.500 15h-3l2.800-4.500z" fill="#fff"/></svg>
        </TaskSlot>
        <TaskSlot $w={24} $ml={465}>
          <svg width="24" height="15" viewBox="0 0 24 15"><path d="M1 12l5-3.500 2 2 6-5.500-2-1.500 9-2v9l-2.500-2L11 15l-3-2.500L3 15z" fill="#3fa02e"/></svg>
        </TaskSlot>
        <TrayText $ml={8} $w={35} $fs={13}>MFPC</TrayText>
        <TrayText $ml={10} $w={43} $fs={13} $c="#2fa42f">+3,84٪</TrayText>
        <TaskSlot $w={16} $ml={23}><svg width="13" height="7" viewBox="0 0 13 7"><path d="M.5 6.500L6.500.5l6 6" fill="none" stroke="#e6e6e6" strokeWidth="1.200"/></svg></TaskSlot>
        <TaskSlot $w={16} $ml={8}><svg width="12" height="16" viewBox="0 0 12 16"><rect x=".5" y="4.500" width="7" height="7" rx="1" fill="none" stroke="#e6e6e6"/><path d="M8 7l3-2v6l-3-2M2 1.500h6M2 14.500h6" fill="none" stroke="#e6e6e6"/></svg></TaskSlot>
        <TaskSlot $w={16} $ml={8}><svg width="15" height="9" viewBox="0 0 15 9"><rect x=".5" y=".5" width="12" height="8" fill="none" stroke="#e6e6e6"/><rect x="2" y="2" width="7" height="5" fill="#e6e6e6"/><rect x="13" y="3" width="2" height="3" fill="#e6e6e6"/></svg></TaskSlot>
        <TaskSlot $w={16} $ml={8}><svg width="17" height="17" viewBox="0 0 17 17"><circle cx="8" cy="8" r="7" fill="none" stroke="#e6e6e6"/><ellipse cx="8" cy="8" rx="3" ry="7" fill="none" stroke="#e6e6e6"/><path d="M1 8h14" stroke="#e6e6e6"/><circle cx="13" cy="13" r="3.500" fill="#1c1c1c" stroke="#e6e6e6"/><path d="M11 15l4-4" stroke="#e6e6e6"/></svg></TaskSlot>
        <TaskSlot $w={16} $ml={8}><svg width="16" height="14" viewBox="0 0 16 14"><path d="M1 5h2l3-3v10L3 9H1z" fill="none" stroke="#e6e6e6"/><path d="M9 4.500c1 1.500 1 3.500 0 5M11.500 3c1.500 2.500 1.500 5.500 0 8M14 1.500c2 3 2 8 0 11" fill="none" stroke="#e6e6e6"/></svg></TaskSlot>
        <TrayText $ml={10} $w={24} $fs={12}>ENG</TrayText>
        <Clock>12:32 AM<br/>3/14/2026</Clock>
        <TaskSlot $w={16} $ml={19}><svg width="16" height="15" viewBox="0 0 16 15"><path d="M.5.5h15v11H8l-2 3-1-3H.5z" fill="none" stroke="#e6e6e6"/></svg></TaskSlot>
      </Taskbar>

      <WatermarkAr>مستقل</WatermarkAr>
      <WatermarkEn>mostaql.com</WatermarkEn>
    </Page>
  );
}
